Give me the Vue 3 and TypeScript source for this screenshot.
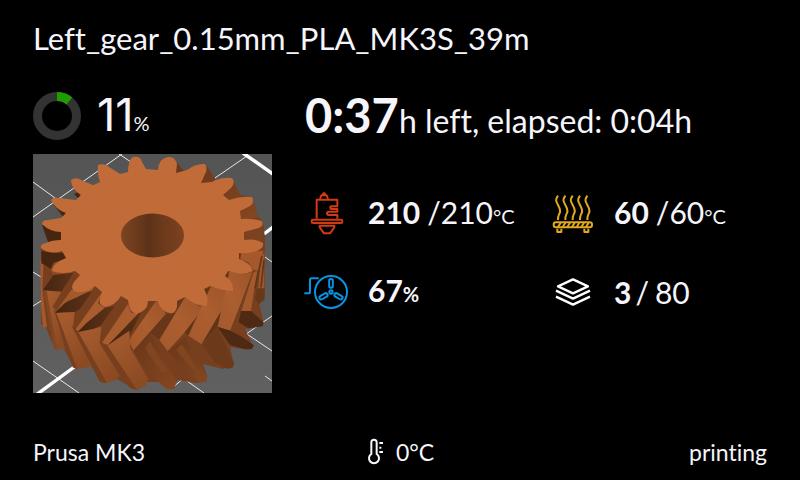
<script setup lang="ts">
interface Reading {
  id: 'nozzle' | 'bed' | 'fan' | 'layers'
  label: string
  value: string
  separator?: string
  target?: string
  unit?: string
}

const job = { name: 'Left_gear_0.15mm_PLA_MK3S_39m', progress: 11, left: '0:37', elapsed: '0:04' }
const printer = { name: 'Prusa MK3', ambient: '0°C', state: 'printing' }

const readings: Reading[] = [
  { id: 'nozzle', label: 'Nozzle temperature', value: '210', separator: '/', target: '210', unit: '°C' },
  { id: 'bed', label: 'Bed temperature', value: '60', separator: '/', target: '60', unit: '°C' },
  { id: 'fan', label: 'Fan speed', value: '67', unit: '%' },
  { id: 'layers', label: 'Layer', value: '3', separator: '/', target: '80' },
]
const waves = [42, 64, 86, 108, 130]
const hatches = [46, 60, 74, 88, 102, 116, 130]
</script>

<template>
  <main class="screen">
    <h1 class="title">{{ job.name }}</h1>

    <div class="body">
      <section class="job">
        <div class="progress">
          <svg class="ring" viewBox="0 0 48 48" aria-hidden="true">
            <circle cx="24" cy="24" r="19.5" fill="none" stroke="#333" stroke-width="9" />
            <circle
              cx="24" cy="24" r="19.5" fill="none" stroke="#1f9c00" stroke-width="9"
              pathLength="100" :stroke-dasharray="`${job.progress} 100`" transform="rotate(-90 24 24)"
            />
          </svg>
          <p class="percent"><span class="huge">{{ job.progress }}</span><span class="unit">%</span></p>
        </div>

        <svg class="preview" viewBox="0 0 239 239" role="img" aria-label="Model preview">
          <defs>
            <linearGradient id="plate" x1="0" y1="0" x2="0" y2="1">
              <stop offset="0" stop-color="#545454" /><stop offset="1" stop-color="#606060" />
            </linearGradient>
            <linearGradient id="bore" x1="0" y1="0" x2="1" y2="0">
              <stop offset="0" stop-color="#7d4422" /><stop offset=".45" stop-color="#5d3218" />
              <stop offset=".6" stop-color="#693819" /><stop offset="1" stop-color="#7b4221" />
            </linearGradient>
            <linearGradient id="lower" x1="0" y1="0" x2=".5" y2="1">
              <stop offset="0" stop-color="#a95d2f" /><stop offset="1" stop-color="#8c4a23" />
            </linearGradient>
            <linearGradient id="upper" x1="1" y1="0" x2="0" y2="1">
              <stop offset="0" stop-color="#9c5429" /><stop offset=".5" stop-color="#ab5e30" /><stop offset="1" stop-color="#a4592c" />
            </linearGradient>
            <linearGradient id="shade" x1="0" y1="0" x2="1" y2="1">
              <stop offset="0" stop-color="#693619" /><stop offset="1" stop-color="#844721" />
            </linearGradient>
            <linearGradient id="gap" x1="0" y1="0" x2="1" y2="0">
              <stop offset="0" stop-color="#432411" /><stop offset="1" stop-color="#603218" />
            </linearGradient>
          </defs>
          <rect width="239" height="239" fill="url(#plate)" />
          <g fill="none" stroke="#e8e8e8" stroke-width="1">
            <path d="M0 28L22 44M0 63L89 0M86 0L98 8M182 24L214 2M232 222L239 227M232 103L239 108" />
            <path d="M0 152L8 147M0 118L8 123M0 207L46 239M144 220L171 239M139 234L157 219M202 172L239 197M206 185L239 162" />
            <path d="M210 -1L240 20M231 80L240 73M3 241L44 211" stroke="#fff" stroke-width="3.4" />
          </g>

          <path
            fill="#773f1e"
            d="M8 92V170L13 174L22 195H31L41 214L57 210L70 229L84 225L103 236L114 228L127 228L134 235L141 235L144 226L163 229L173 227L174 222L170 210L190 215L201 211L197 193L215 196L220 192L212 175L230 172L230 166L226 149L232 143V85L230 67L225 63L219 43L207 41L199 25L180 31L173 15L168 12L151 18L141 5L125 18L120 60L40 80Z"
          />

          <!-- left flank -->
          <g transform="translate(0 86) scale(.33333)">
            <path fill="#a4582b" d="M22 60H32L28 150L42 262H30L24 200Z" />
            <path fill="#462611" d="M25 33L60 38H92L100 52L88 75L55 88L35 75L25 70Z" />
            <path fill="#8c4b24" d="M62 68L88 60L120 98L62 105L52 90Z" />
            <path fill="url(#gap)" d="M62 105L123 98L85 155L30 150Z" />
            <path fill="url(#lower)" d="M38 152L85 155L66 205L96 327L68 329Z" />
            <path fill="#834622" d="M30 150L41 152L72 329L63 327Z" />
            <path fill="#773f1e" d="M125 93L144 107L115 152L66 206L58 200Z" />
            <path fill="#a4592c" d="M115 150L185 142L175 156L105 182L70 212Z" />
            <path fill="url(#gap)" d="M182 150L140 208L125 216L66 219L95 190L160 158Z" />
            <path fill="url(#lower)" d="M68 219L125 216L120 265L182 378L165 381L130 388Z" />
            <path fill="#773f1e" d="M60 203L70 219L133 388L119 382Z" />
            <path fill="#773f1e" d="M185 137L209 150L195 178L125 268L117 262Z" />
            <path fill="#a95d2f" d="M205 160L195 190L215 203L160 250L135 273L128 268Z" />
            <path fill="url(#gap)" d="M245 198L205 255L180 267L135 277L160 250L215 205Z" />
            <path fill="url(#lower)" d="M135 277L180 267L205 260L200 310L260 407L247 421L220 429Z" />
            <path fill="#773f1e" d="M119 264L135 275L222 430L200 425Z" />
            <path fill="#773f1e" d="M260 168L289 173L284 193L206 312L200 300Z" />
            <path fill="#a95d2f" d="M285 192L294 218H318L225 315L207 308Z" />
            <path fill="url(#gap)" d="M315 222L348 205L290 285L222 317L240 300Z" />
            <path fill="url(#lower)" d="M222 317L289 272L292 325L345 415L340 435L312 451Z" />
            <path fill="#773f1e" d="M203 312L222 315L312 451L290 443Z" />
            <path fill="#743d1c" d="M342 182L366 184L362 210L300 300L290 285Z" />
          </g>

          <!-- front and right flank -->
          <g transform="translate(117 66) scale(.33333)">
            <path fill="url(#upper)" d="M18 243L48 282L0 335L-50 392L-61 365L-55 347Z" />
            <path fill="url(#shade)" d="M-50 392L0 336L80 485L70 508L50 507L-8 458Z" />
            <path fill="#814521" d="M-15 385L0 365L55 455L35 460Z" />
            <path fill="#68371a" d="M48 282L80 278V238L106 230L30 360L0 337Z" />
            <path fill="url(#upper)" d="M106 230L150 260L166 256L105 336L53 393L28 360Z" />
            <path fill="url(#shade)" d="M55 394L106 350L170 470L169 486L150 488L92 438Z" />
            <path fill="#814521" d="M78 390L95 372L150 460L142 465Z" />
            <path fill="#643417" d="M168 258L172 232L160 210L182 200L184 218L115 347L104 336Z" />
            <path fill="url(#upper)" d="M182 200L235 215L250 211L155 373L115 347Z" />
            <path fill="#6c391a" d="M157 374L203 325L252 430L248 443L232 446L195 428Z" />
            <path fill="#633518" d="M250 211L236 184L222 170L238 155L250 175L203 320L155 373Z" />
            <path fill="url(#upper)" d="M238 155L295 160L310 155L240 332L203 320Z" />
            <path fill="#4e2a14" d="M203 321L242 332L275 350L312 376L305 388L280 386L240 375Z" />
            <path fill="#71401f" d="M310 150L298 128L268 112L278 95L340 98L328 210L300 272L274 274L242 332Z" />
            <path fill="#a4582b" d="M310 158L322 150L303 273H274Z" />
            <path fill="#a4582b" d="M274 96L340 92L326 151L310 150L295 127L271 118Z" />
            <path fill="#4e2a14" d="M273 273H303L341 307L338 319L295 325L266 307Z" />
            <path fill="#693819" d="M322 205H343V240L326 252L315 235Z" />
            <path fill="#9f562b" d="M332 115L343 96V205H325Z" />
            <path fill="none" stroke="#633518" stroke-width="5" d="M336 108L315 205M270 100L264 120M342 120L333 202" />
          </g>

          <!-- recesses between the upper teeth -->
          <g fill="url(#shade)">
            <path d="M142 19L144 9L152 18V21ZM174 12L182 25L178 32L168 29ZM201 28L207 41L198 46L190 41ZM220 46L225 63L209 66L206 58Z" />
            <path d="M229 74L231 88L211 86V78Z" fill="#7b4220" />
          </g>
          <g fill="#462611">
            <path d="M9 71L28 78V87L15 88ZM20 50L33 58L31 64ZM41 40L49 36L46 45ZM60 31L73 26L69 32Z" />
          </g>

          <path
            fill="#c16b38"
            d="M125 16Q125 5 135 3Q142 2 144 10L143 19L154 16Q163 9 172 10Q175 15 172 20L168 29L179 28Q188 23 199 24Q203 28 198 34L190 41L196 46Q207 42 219 43Q222 49 217 52L207 57L208 65Q220 64 229 67Q231 72 226 74L211 78V86Q223 84 230 89Q231 94 224 97Q215 100 206 99L206 105Q218 109 220 117Q212 121 203 119L195 117L192 122Q201 128 200 137Q188 137 177 132L171 135Q177 146 173 152Q162 152 152 143L144 147Q145 156 140 159Q130 161 124 147L115 147Q115 157 103 160Q96 158 95 146L88 142Q82 152 72 153Q63 150 69 138L62 132Q55 139 44 138Q36 136 41 128L47 121L42 117Q30 121 19 117Q20 109 33 104L29 97Q18 101 9 95Q5 91 13 89Q19 86 28 86V78Q17 78 9 70Q9 66 15 66L28 64L33 59Q23 56 18 46Q20 43 26 44L43 46L48 41Q38 35 38 26Q43 22 50 27L60 31L67 28Q64 20 65 11Q72 9 76 13L87 20L95 18Q95 6 100 3Q108 2 109 8L113 15Z"
          />
          <ellipse cx="119.500" cy="81.500" rx="31.500" ry="22" fill="url(#bore)" />
        </svg>
      </section>

      <section class="status">
        <p class="time"><strong class="huge">{{ job.left }}</strong>h left, elapsed: {{ job.elapsed }}h</p>

        <ul class="readings">
          <li v-for="r in readings" :key="r.id" class="reading" :aria-label="r.label">
            <svg v-if="r.id === 'nozzle'" class="icon nozzle" viewBox="24 27 150 144" aria-hidden="true">
              <path d="M78 54L82 43H98L102 54M86 42L88 37H92L94 42" />
              <path d="M68 113V56H130V76H114Q109 76 109 80T114 84H130V92H104Q99 92 99 97T104 102H130V113" />
              <rect x="53" y="116" width="92" height="10" rx="4" />
              <path d="M77 134H121V139L108 157H90L77 139Z" />
            </svg>
            <svg v-else-if="r.id === 'fan'" class="icon fan" viewBox="20 261 150 144" aria-hidden="true">
              <circle cx="107" cy="333" r="48" />
              <circle cx="107" cy="333" r="5" />
              <rect v-for="a in [0, 120, 240]" :key="a" x="101.500" y="294" width="11" height="26" rx="5" :transform="`rotate(${a} 107 333)`" />
              <path d="M27 337H40Q44 337 44 332V297Q44 292 49 292H70" />
            </svg>
            <svg v-else-if="r.id === 'bed'" class="icon bed" viewBox="12 21 150 144" aria-hidden="true">
              <path v-for="x in waves" :key="x" :d="`M${x} 38C${x - 8} 50 ${x - 7} 54 ${x} 66S${x + 8} 88 ${x + 3} 94Q${x} 100 ${x} 111`" />
              <rect x="29" y="118" width="115" height="15" rx="7" />
              <path v-for="x in hatches" :key="`h${x}`" :d="`M${x - 4} 132L${x + 4} 119`" />
              <path d="M40 137V147H52V137M121 137V147H133V137" />
            </svg>
            <svg v-else class="icon layers" viewBox="12 255 150 144" aria-hidden="true">
              <path d="M87 289L132 310L87 331L42 310Z" />
              <path d="M36 323L87 347L138 323M36 341L87 365L138 341" />
            </svg>
            <span class="amount">
              <strong>{{ r.value }}</strong><span v-if="r.separator" :class="['separator', { spaced: !r.unit }]">{{ r.separator }}</span>{{ r.target }}<span v-if="r.unit" :class="['unit', { strong: !r.target }]">{{ r.unit }}</span>
            </span>
          </li>
        </ul>
      </section>
    </div>

    <footer class="footer">
      <span>{{ printer.name }}</span>
      <span class="ambient">
        <svg class="thermometer" viewBox="42 24 60 84" aria-hidden="true">
          <path d="M58 72V37A8 8 0 0 1 74 37V72A15 15 0 1 1 58 72Z" />
          <path d="M82 39H93M82 53H88M82 66H93" />
        </svg>
        {{ printer.ambient }}
      </span>
      <span class="state">{{ printer.state }}</span>
    </footer>
  </main>
</template>

<style>
body {
  background: #000;
}
</style>

<style scoped>
.screen {
  box-sizing: border-box;
  display: flex;
  flex-direction: column;
  min-height: 100vh;
  padding: 18px 33px 12px;
  background: #000;
  color: #f6f5fb;
  font-family: Lato, "Open Sans", sans-serif;
  font-variant-ligatures: none;
}
.title {
  margin: 0 0 34px;
  font-size: 31px;
  font-weight: 400;
  line-height: 40px;
}
.body {
  display: grid;
  grid-template-columns: 239px 1fr;
  column-gap: 30px;
}
.progress {
  display: flex;
  gap: 16px;
  height: 48px;
  margin-bottom: 14px;
}
.ring {
  width: 48px;
  height: 48px;
}
.percent,
.time {
  margin: 0;
  line-height: 46px;
  white-space: nowrap;
}
.huge {
  font-size: 47px;
}
.percent .huge {
  font-family: Inter, sans-serif;
  font-size: 45px;
}
.unit {
  font-size: 20px;
}
.preview {
  display: block;
  width: 100%;
}
.time {
  padding-left: 3px;
  font-size: 32px;
}
.readings {
  display: grid;
  grid-template-columns: 246px 1fr;
  row-gap: 30px;
  margin: 46px 0 0;
  padding: 0;
  list-style: none;
}
.reading {
  display: flex;
  align-items: center;
  gap: 16px;
  height: 48px;
}
.amount {
  font-size: 30px;
  line-height: 48px;
  white-space: nowrap;
}
.separator {
  margin-left: 7px;
}
.spaced {
  margin: 0 6px 0 4px;
}
.strong {
  font-weight: 700;
}
.icon {
  flex: none;
  width: 50px;
  height: 48px;
  fill: none;
  stroke-width: 6;
  stroke-linejoin: round;
}
.nozzle {
  stroke: #d23a14;
}
.fan {
  stroke: #0a93e2;
}
.bed {
  stroke: #e2a91f;
}
.layers {
  stroke: #fff;
  stroke-width: 7;
}
.footer {
  display: grid;
  grid-template-columns: 1fr auto 1fr;
  margin-top: auto;
  font-size: 23px;
  line-height: 32px;
}
.ambient {
  display: flex;
  align-items: center;
  gap: 10px;
}
.thermometer {
  width: 20px;
  height: 28px;
  fill: none;
  stroke: #f6f5fb;
  stroke-width: 6;
}
.state {
  text-align: right;
}
</style>
